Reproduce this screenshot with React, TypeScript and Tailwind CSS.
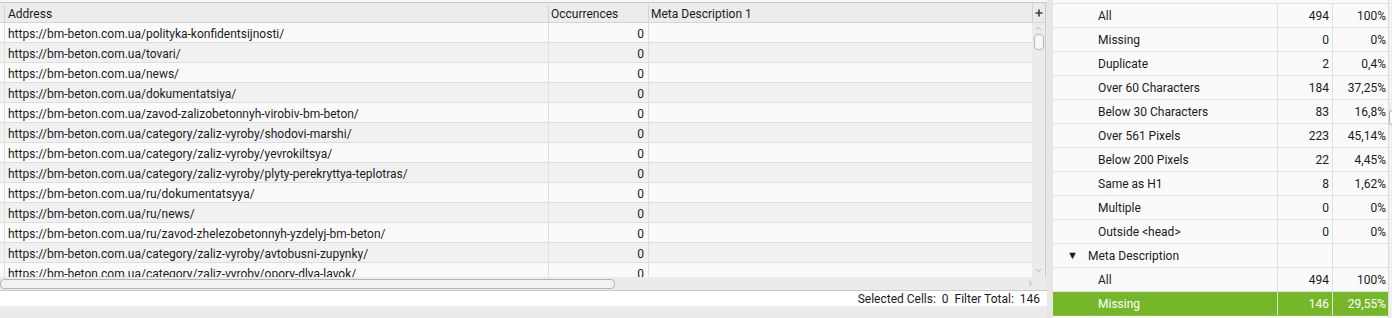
import { ChevronUp, ChevronDown, ChevronRight, Plus } from 'lucide-react'

const urls = [
  'https://bm-beton.com.ua/polityka-konfidentsijnosti/',
  'https://bm-beton.com.ua/tovari/',
  'https://bm-beton.com.ua/news/',
  'https://bm-beton.com.ua/dokumentatsiya/',
  'https://bm-beton.com.ua/zavod-zalizobetonnyh-virobiv-bm-beton/',
  'https://bm-beton.com.ua/category/zaliz-vyroby/shodovi-marshi/',
  'https://bm-beton.com.ua/category/zaliz-vyroby/yevrokiltsya/',
  'https://bm-beton.com.ua/category/zaliz-vyroby/plyty-perekryttya-teplotras/',
  'https://bm-beton.com.ua/ru/dokumentatsyya/',
  'https://bm-beton.com.ua/ru/news/',
  'https://bm-beton.com.ua/ru/zavod-zhelezobetonnyh-yzdelyj-bm-beton/',
  'https://bm-beton.com.ua/category/zaliz-vyroby/avtobusni-zupynky/',
  'https://bm-beton.com.ua/category/zaliz-vyroby/opory-dlya-lavok/',
]

type Stat = { label: string; count?: string; pct?: string; group?: boolean; active?: boolean }

const stats: Stat[] = [
  { label: 'All', count: '494', pct: '100%' },
  { label: 'Missing', count: '0', pct: '0%' },
  { label: 'Duplicate', count: '2', pct: '0,4%' },
  { label: 'Over 60 Characters', count: '184', pct: '37,25%' },
  { label: 'Below 30 Characters', count: '83', pct: '16,8%' },
  { label: 'Over 561 Pixels', count: '223', pct: '45,14%' },
  { label: 'Below 200 Pixels', count: '22', pct: '4,45%' },
  { label: 'Same as H1', count: '8', pct: '1,62%' },
  { label: 'Multiple', count: '0', pct: '0%' },
  { label: 'Outside <head>', count: '0', pct: '0%' },
  { label: 'Meta Description', group: true },
  { label: 'All', count: '494', pct: '100%' },
  { label: 'Missing', count: '146', pct: '29,55%', active: true },
]

function ResultsTable() {
  return (
    <div className="flex h-[275px] border-t border-[#c9c9c9]">
      <div className="flex w-[1032px] flex-col overflow-hidden">
        <div className="flex h-[20px] shrink-0 border-b border-[#d4d4d4] bg-[#ececec] pt-[2px]">
          <div className="w-[5px] border-r border-[#d4d4d4]" />
          <div className="flex w-[544px] items-center border-r border-[#d4d4d4] pl-[3px]">Address</div>
          <div className="flex w-[100px] items-center border-r border-[#d4d4d4] pl-[2px]">Occurrences</div>
          <div className="flex flex-1 items-center pl-[2px]">Meta Description 1</div>
        </div>
        {urls.map((url, i) => (
          <div
            key={url}
            className={`flex h-[20px] shrink-0 border-b border-[#dedede] ${i % 2 === 0 ? 'bg-[#fafafa]' : 'bg-[#f1f1f1]'}`}
          >
            <div className="w-[5px] border-r border-[#dedede]" />
            <div className="flex w-[544px] items-center border-r border-[#dedede] pl-[3px] pt-[2px] whitespace-nowrap">{url}</div>
            <div className="flex w-[100px] items-center justify-end border-r border-[#dedede] pr-[4px] pt-[2px]">0</div>
            <div className="flex-1" />
          </div>
        ))}
      </div>
      <div className="flex w-[14px] flex-col items-center border-r border-[#c9c9c9] bg-[#ebebeb]">
        <div className="flex h-[20px] w-full items-center justify-center border-b border-l border-[#d4d4d4]">
          <Plus className="size-[10px] text-[#444]" strokeWidth={4} />
        </div>
        <ChevronUp className="mt-[1px] size-[9px] text-[#999]" strokeWidth={2} />
        <div className="mt-[1px] h-[16px] w-[10px] rounded-[4px] border border-[#b5b5b5] bg-[#f7f7f7]" />
        <div className="flex-1" />
        <ChevronDown className="mb-[2px] size-[9px] text-[#999]" strokeWidth={2} />
      </div>
    </div>
  )
}

function StatsPanel() {
  return (
    <div className="flex w-[335px] flex-col bg-[#fafafa]">
      <div className="h-[4px] border-b border-[#dedede]" />
      {stats.map((s, i) => (
        <div
          key={i}
          className={`flex h-[24px] shrink-0 border-b ${s.active ? 'border-[#8cc44a] bg-[#76b72a] text-white' : 'border-[#e0e0e0]'}`}
        >
          <div className="flex w-[225px] items-center border-r border-[#e0e0e0]">
            {s.group ? (
              <>
                <span className="ml-[14px] w-[21px] text-[11px] leading-none">▼</span>
                <span>{s.label}</span>
              </>
            ) : (
              <span className="ml-[45px]">{s.label}</span>
            )}
          </div>
          <div className="flex w-[55px] items-center justify-end border-r border-[#e0e0e0] pr-[3px]">{s.count}</div>
          <div className="flex flex-1 items-center justify-end pr-[2px]">{s.pct}</div>
        </div>
      ))}
    </div>
  )
}

export default function App() {
  return (
    <div className="flex h-[318px] w-[1392px] overflow-hidden bg-[#ebebeb] font-['Roboto',sans-serif] text-[12px] text-[#1b1b1b]">
      <div className="flex w-[1047px] flex-col">
        <div className="h-[2px] bg-[#f7f7f7]" />
        <ResultsTable />
        <div className="flex h-[13px] items-center bg-[#ebebeb]">
          <div className="h-[10px] w-[615px] rounded-[4px] border border-[#b5b5b5] bg-[#f2f2f2]" />
          <div className="flex-1" />
          <ChevronRight className="mr-[12px] size-[9px] text-[#999]" strokeWidth={2} />
        </div>
        <div className="flex h-[16px] items-center justify-end gap-[6px] border-t border-[#c9c9c9] bg-white pr-[7px]">
          <span>Selected Cells:&nbsp; 0</span>
          <span>Filter Total:&nbsp; 146</span>
        </div>
        <div className="flex-1 bg-[#ebebeb]" />
      </div>
      <div className="w-[6px] bg-[#e6e6e6]" />
      <StatsPanel />
      <div className="flex w-[4px] flex-col border-l border-[#dcdcdc] bg-[#f0f0f0]">
        <div className="mt-[110px] h-[15px] w-[4px] rounded-l-[3px] border border-r-0 border-[#b5b5b5] bg-white" />
      </div>
    </div>
  )
}
